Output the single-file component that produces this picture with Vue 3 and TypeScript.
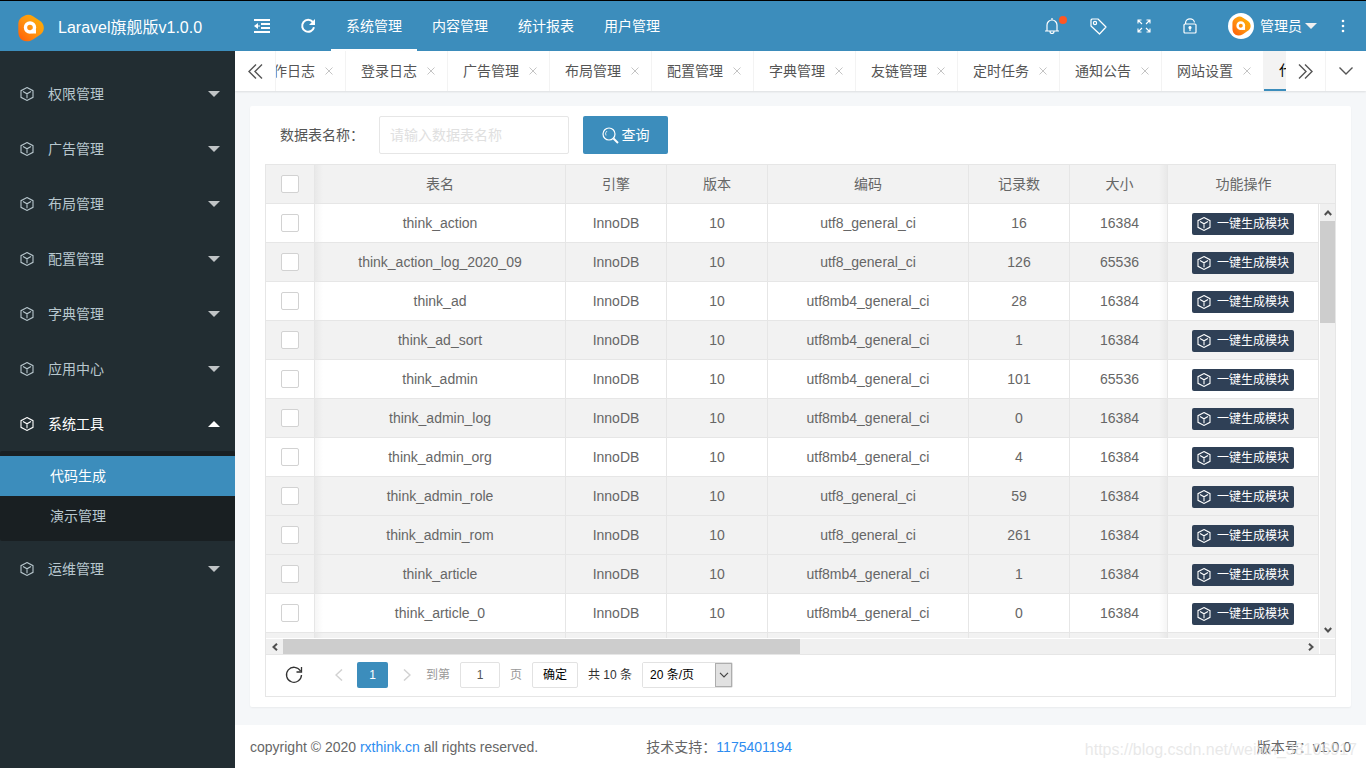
<script setup lang="ts">
import { ref } from 'vue'

interface MenuItem {
  title: string
  open?: boolean
  children?: string[]
}

interface TableRow {
  name: string
  charset: string
  count: number
  size: number
  hover?: boolean
}

const topNav: string[] = ['系统管理', '内容管理', '统计报表', '用户管理']

const menu: MenuItem[] = [
  { title: '权限管理' },
  { title: '广告管理' },
  { title: '布局管理' },
  { title: '配置管理' },
  { title: '字典管理' },
  { title: '应用中心' },
  { title: '系统工具', open: true, children: ['代码生成', '演示管理'] },
  { title: '运维管理' },
]

const tabs: string[] = [
  '操作日志', '登录日志', '广告管理', '布局管理', '配置管理', '字典管理',
  '友链管理', '定时任务', '通知公告', '网站设置', '代码生成',
]

const rows: TableRow[] = [
  { name: 'think_action', charset: 'utf8_general_ci', count: 16, size: 16384 },
  { name: 'think_action_log_2020_09', charset: 'utf8_general_ci', count: 126, size: 65536 },
  { name: 'think_ad', charset: 'utf8mb4_general_ci', count: 28, size: 16384 },
  { name: 'think_ad_sort', charset: 'utf8mb4_general_ci', count: 1, size: 16384 },
  { name: 'think_admin', charset: 'utf8mb4_general_ci', count: 101, size: 65536 },
  { name: 'think_admin_log', charset: 'utf8mb4_general_ci', count: 0, size: 16384 },
  { name: 'think_admin_org', charset: 'utf8mb4_general_ci', count: 4, size: 16384 },
  { name: 'think_admin_role', charset: 'utf8_general_ci', count: 59, size: 16384 },
  { name: 'think_admin_rom', charset: 'utf8_general_ci', count: 261, size: 16384, hover: true },
  { name: 'think_article', charset: 'utf8mb4_general_ci', count: 1, size: 16384 },
  { name: 'think_article_0', charset: 'utf8mb4_general_ci', count: 0, size: 16384 },
]

const keyword = ref('')
const page = ref('1')
const limit = ref('20')
</script>

<template>
  <div class="app">
    <svg class="defs" width="0" height="0" aria-hidden="true">
      <defs>
        <linearGradient id="brandFill" x1="1" y1="0" x2="0" y2="1">
          <stop offset="0" stop-color="#ffb400" />
          <stop offset="0.5" stop-color="#ff9410" />
          <stop offset="1" stop-color="#ff5a08" />
        </linearGradient>
        <symbol id="brand" viewBox="0 0 26 28">
          <path d="M6 2C9 .3 12 .6 15 2.300l6 4c3.500 2 4.800 4.500 4.800 7.700s-1.500 5.500-4.800 7.500l-6 4c-3.500 2.200-7.500 2.400-10.500.8C1.500 24.500.4 21.500.3 18V9.500C.5 6 2.500 3.500 6 2z" fill="url(#brandFill)" />
          <circle cx="12" cy="13.500" r="4.500" fill="none" stroke="#fff" stroke-width="3.400" />
          <path d="M13.500 15.500h4.500v4h-4.500z" fill="#fff" />
        </symbol>
        <symbol id="cube" viewBox="0 0 14 14">
          <path d="M7 .6 13 3.700v6.600L7 13.400 1 10.300V3.700zM3 4.600 7 6.800 11 4.600M7 6.800v4.400" fill="none" stroke="currentColor" stroke-width="1.100" />
        </symbol>
      </defs>
    </svg>

    <header class="header">
      <div class="logo">
        <svg width="26" height="28"><use href="#brand" /></svg>
        <h1>Laravel旗舰版v1.0.0</h1>
      </div>
      <button class="icon-btn" type="button" aria-label="折叠菜单">
        <svg width="16" height="14" viewBox="0 0 16 14" fill="none" stroke="currentColor">
          <path d="M0 1h16M7 5h9M7 9h9M0 13h16" stroke-width="1.800" />
          <path d="M0 7 4 4v6z" fill="currentColor" stroke="none" /><path d="M3 7h3" />
        </svg>
      </button>
      <button class="icon-btn" type="button" aria-label="刷新页面">
        <svg width="16" height="16" viewBox="0 0 16 16" fill="none" stroke="currentColor" stroke-width="2">
          <path d="M12.800 4A6 6 0 1 0 14 9.300" /><path d="M15 1v6H9z" fill="currentColor" stroke="none" />
        </svg>
      </button>
      <nav class="top-nav">
        <a v-for="(n, i) in topNav" :key="n" href="#" :class="{ active: i === 0 }">{{ n }}</a>
      </nav>
      <div class="tools">
        <button class="icon-btn" type="button" aria-label="消息">
          <svg width="16" height="16" viewBox="0 0 16 16" fill="none" stroke="currentColor" stroke-width="1.200">
            <path d="M1 13h14M3 13V7a5 5 0 0 1 10 0v6M8 0v2M6 13.500a2 2 0 0 0 4 0" />
          </svg>
          <i class="dot"></i>
        </button>
        <button class="icon-btn" type="button" aria-label="标签">
          <svg width="17" height="17" viewBox="0 0 17 17" fill="none" stroke="currentColor" stroke-width="1.200">
            <path d="M1 2 2 1h6l8 8-6.500 7L1 8z" stroke-linejoin="round" /><circle cx="5" cy="5" r="1.600" />
          </svg>
        </button>
        <button class="icon-btn" type="button" aria-label="全屏">
          <svg width="14" height="14" viewBox="0 0 14 14" fill="none" stroke="currentColor" stroke-width="1.100">
            <path d="M1 4.500V1h3.500M1 1l4 4M9.500 1H13v3.500M13 1 9 5M1 9.500V13h3.500M1 13l4-4M13 9.500V13H9.500M13 13 9 9" />
          </svg>
        </button>
        <button class="icon-btn" type="button" aria-label="锁屏">
          <svg width="14" height="16" viewBox="0 0 14 16" fill="none" stroke="currentColor" stroke-width="1.200">
            <rect x="1" y="6" width="12" height="9" rx="1" /><path d="M2.600 6V4.500a4.400 3.700 0 0 1 8.800 0M7 10v3" /><circle cx="7" cy="9.500" r="1" fill="currentColor" />
          </svg>
        </button>
        <button class="user" type="button">
          <span class="avatar"><svg width="19" height="20"><use href="#brand" /></svg></span>
          <span>管理员</span>
          <i class="caret"></i>
        </button>
        <button class="icon-btn" type="button" aria-label="更多">
          <svg width="4" height="14" viewBox="0 0 4 14" fill="currentColor"><circle cx="2" cy="2" r="1.300" /><circle cx="2" cy="7" r="1.300" /><circle cx="2" cy="12" r="1.300" /></svg>
        </button>
      </div>
    </header>

    <div class="layout">
      <aside class="side">
        <ul>
          <li v-for="m in menu" :key="m.title" :class="{ open: m.open }">
            <a class="menu-link" href="#">
              <svg width="14" height="14"><use href="#cube" /></svg>
              <span>{{ m.title }}</span>
              <i class="caret"></i>
            </a>
            <div v-if="m.children" class="sub">
              <a v-for="(c, i) in m.children" :key="c" href="#" :class="{ active: i === 0 }">{{ c }}</a>
            </div>
          </li>
        </ul>
      </aside>

      <div class="content">
        <div class="tab-bar">
          <button class="tab-ctl prev" type="button" aria-label="向左">
            <svg width="15" height="15" viewBox="0 0 15 15" fill="none" stroke="currentColor" stroke-width="1.400"><path d="M8 .5 1 7.500l7 7M14 .5 7 7.500l7 7" /></svg>
          </button>
          <div class="tab-view">
            <div class="tab-strip">
              <div v-for="t in tabs" :key="t" class="tab" :class="{ active: t === '代码生成' }">
                <a href="#">{{ t }}</a>
                <button type="button" aria-label="关闭">
                  <svg width="8" height="8" viewBox="0 0 8 8" stroke="currentColor"><path d="M.5.5l7 7M7.500.5l-7 7" /></svg>
                </button>
              </div>
            </div>
          </div>
          <button class="tab-ctl next" type="button" aria-label="向右">
            <svg width="15" height="15" viewBox="0 0 15 15" fill="none" stroke="currentColor" stroke-width="1.400"><path d="M1 .5l7 7-7 7M7 .5l7 7-7 7" /></svg>
          </button>
          <button class="tab-ctl" type="button" aria-label="标签操作">
            <svg width="14" height="8" viewBox="0 0 14 8" fill="none" stroke="currentColor" stroke-width="1.400"><path d="M.5.5 7 7 13.500.5" /></svg>
          </button>
        </div>

        <main class="card">
          <form class="search" @submit.prevent>
            <label for="kw">数据表名称：</label>
            <input id="kw" v-model="keyword" type="text" placeholder="请输入数据表名称" />
            <button type="submit">
              <svg width="17" height="17" viewBox="0 0 17 17" fill="none" stroke="currentColor">
                <circle cx="7" cy="7" r="6" stroke-width="1.200" /><path d="M4 8.500A3.500 3.500 0 0 1 5 4" stroke-width=".8" /><path d="m11.500 11.500 4.500 4.500" stroke-width="2" />
              </svg>
              <span>查询</span>
            </button>
          </form>

          <section class="grid">
            <table class="head">
              <colgroup>
                <col class="w-check" /><col /><col class="w-sm" /><col class="w-sm" /><col class="w-lg" /><col class="w-sm" /><col class="w-size" /><col class="w-act" /><col class="w-bar" />
              </colgroup>
              <thead>
                <tr>
                  <th><input type="checkbox" aria-label="全选" /></th>
                  <th class="shade-l">表名</th>
                  <th>引擎</th>
                  <th>版本</th>
                  <th>编码</th>
                  <th>记录数</th>
                  <th class="shade-r">大小</th>
                  <th class="plain">功能操作</th>
                  <th class="plain"></th>
                </tr>
              </thead>
            </table>
            <div class="body">
              <div class="view">
                <table>
                  <colgroup>
                    <col class="w-check" /><col /><col class="w-sm" /><col class="w-sm" /><col class="w-lg" /><col class="w-sm" /><col class="w-size" /><col class="w-act" />
                  </colgroup>
                  <tbody>
                    <tr v-for="r in rows" :key="r.name" :class="{ hover: r.hover }">
                      <td><input type="checkbox" :aria-label="r.name" /></td>
                      <td class="shade-l">{{ r.name }}</td>
                      <td>InnoDB</td>
                      <td>10</td>
                      <td>{{ r.charset }}</td>
                      <td>{{ r.count }}</td>
                      <td class="shade-r">{{ r.size }}</td>
                      <td>
                        <button class="gen" type="button">
                          <svg width="14" height="14"><use href="#cube" /></svg>
                          <span>一键生成模块</span>
                        </button>
                      </td>
                    </tr>
                    <tr aria-hidden="true">
                      <td></td><td class="shade-l"></td><td></td><td></td><td></td><td></td><td class="shade-r"></td><td></td>
                    </tr>
                  </tbody>
                </table>
              </div>
              <div class="vbar">
                <span class="arrow"><svg width="8" height="6" viewBox="0 0 8 6"><path d="M.8 5 4 1.500 7.200 5" /></svg></span>
                <span class="thumb"></span>
                <span class="arrow end"><svg width="8" height="6" viewBox="0 0 8 6"><path d="M.8 1 4 4.500 7.200 1" /></svg></span>
              </div>
            </div>
            <div class="hbar">
              <span class="arrow"><svg width="6" height="8" viewBox="0 0 6 8"><path d="M5 .8 1.500 4 5 7.200" /></svg></span>
              <span class="track"><span class="thumb"></span></span>
              <span class="arrow"><svg width="6" height="8" viewBox="0 0 6 8"><path d="M1 .8 4.500 4 1 7.200" /></svg></span>
              <span class="corner"></span>
            </div>
            <div class="pager">
              <button class="reload" type="button" aria-label="刷新">
                <svg width="18" height="18" viewBox="0 0 18 18" fill="none" stroke="currentColor" stroke-width="1.300"><path d="M15.500 5A7.500 7.500 0 1 0 16.500 9M16.500 1v5h-5" /></svg>
              </button>
              <button class="step" type="button" aria-label="上一页">
                <svg width="8" height="12" viewBox="0 0 8 12"><path d="M7 .5 1 6l6 5.500" /></svg>
              </button>
              <button class="num" type="button">1</button>
              <button class="step after" type="button" aria-label="下一页">
                <svg width="8" height="12" viewBox="0 0 8 12"><path d="m1 .5 6 5.500-6 5.500" /></svg>
              </button>
              <label class="skip">到第<input v-model="page" type="text" />页</label>
              <button class="ok" type="button">确定</button>
              <span class="total">共 10 条</span>
              <span class="limit">
                <select v-model="limit" aria-label="每页条数">
                  <option value="20">20 条/页</option>
                </select>
                <i><svg width="10" height="6" viewBox="0 0 10 6"><path d="M1 .8 5 4.800 9 .8" /></svg></i>
              </span>
            </div>
          </section>
        </main>

        <footer class="footer">
          <span>copyright © 2020 <a href="#">rxthink.cn</a> all rights reserved.</span>
          <span>技术支持：<a href="#">1175401194</a></span>
          <span>版本号：v1.0.0</span>
        </footer>
      </div>
    </div>
    <span class="watermark">https://blog.csdn.net/weixin_38106917</span>
  </div>
</template>

<style>
body {
  margin: 0;
}
</style>

<style scoped>
* {
  box-sizing: border-box;
}
.app {
  height: 100vh;
  display: flex;
  flex-direction: column;
  border-top: 1px solid #000;
  background: #f5f7f9;
  color: #666;
  font: 14px/20px "Liberation Sans", "Noto Sans CJK SC", sans-serif;
  overflow: hidden;
}
.defs {
  position: absolute;
}
a {
  color: inherit;
  text-decoration: none;
}
button,
input,
select {
  margin: 0;
  font: inherit;
  color: inherit;
}
button {
  padding: 0;
  border: 0;
  background: none;
  cursor: pointer;
}
svg {
  flex: none;
}

/* header */
.header {
  flex: none;
  display: flex;
  height: 50px;
  background: #3c8dbc;
  color: #fff;
}
.logo {
  display: flex;
  align-items: center;
  gap: 14px;
  width: 239px;
  padding: 3px 0 0 18px;
}
.logo h1 {
  margin: 0;
  font-size: 16px;
  font-weight: 400;
  white-space: nowrap;
}
.icon-btn {
  position: relative;
  display: flex;
  align-items: center;
  justify-content: center;
  width: 46px;
  height: 50px;
}
.top-nav {
  display: flex;
}
.top-nav a {
  padding: 0 15px;
  line-height: 50px;
}
.top-nav a.active {
  border-bottom: 2px solid #fff;
}
.tools {
  display: flex;
  margin-left: auto;
}
.dot {
  position: absolute;
  top: 15px;
  right: 8px;
  width: 8px;
  height: 8px;
  border-radius: 50%;
  background: #ff5722;
}
.user {
  display: flex;
  align-items: center;
  width: 107px;
  padding-left: 15px;
  gap: 6px;
}
.avatar {
  display: flex;
  align-items: center;
  justify-content: center;
  width: 26px;
  height: 26px;
  border-radius: 50%;
  background: #fff;
}
.caret {
  flex: none;
  border: 6px solid transparent;
  border-top-color: currentColor;
  border-bottom: 0;
}
.user .caret {
  margin-left: -3px;
  color: #f0f0f0;
}

/* sidebar */
.layout {
  flex: 1;
  display: flex;
  min-height: 0;
}
.side {
  flex: none;
  width: 235px;
  background: #222d32;
  color: #b8c7ce;
}
.side ul {
  margin: 0;
  padding: 15px 0 0;
  list-style: none;
}
.menu-link {
  display: flex;
  align-items: center;
  gap: 14px;
  height: 55px;
  padding: 0 15px 0 20px;
}
.menu-link .caret {
  margin-left: auto;
  color: #c0c4c6;
}
.open .menu-link {
  color: #fff;
}
.open .caret {
  border-top: 0;
  border-bottom: 6px solid #fff;
}
.sub {
  padding: 5px 0;
  border-radius: 2px;
  background: #191f22;
}
.sub a {
  display: block;
  padding-left: 50px;
  line-height: 40px;
}
.sub a.active {
  background: #3c8dbc;
  color: #fff;
}

/* tabs */
.content {
  flex: 1;
  display: flex;
  flex-direction: column;
  min-width: 0;
}
.tab-bar {
  flex: none;
  display: flex;
  height: 40px;
  background: #fff;
  box-shadow: 0 1px 2px rgba(0, 0, 0, 0.1);
  color: #555;
}
.tab-ctl {
  flex: none;
  display: flex;
  align-items: center;
  justify-content: center;
  width: 40px;
}
.prev {
  width: 41px;
  border-right: 1px solid #f3f3f3;
}
.next {
  border-right: 1px solid #f3f3f3;
}
.tab-view {
  flex: 1;
  min-width: 0;
  overflow: hidden;
}
.tab-strip {
  display: flex;
  width: max-content;
  margin-left: -32px;
}
.tab {
  display: flex;
  align-items: center;
  width: 102px;
  height: 40px;
  padding-left: 15px;
  border-right: 1px solid #f3f3f3;
}
.tab button {
  display: flex;
  padding: 4px 10px;
  color: #c4c4c4;
}
.tab.active {
  border-bottom: 2px solid #3c8dbc;
  background: #f3f3f3;
  color: #000;
}

/* card */
.card {
  flex: 1;
  display: flex;
  flex-direction: column;
  min-height: 0;
  margin: 15px 15px 18px;
  padding: 10px 15px;
  border-radius: 2px;
  background: #fff;
  box-shadow: 0 1px 2px rgba(0, 0, 0, 0.05);
}
.search {
  flex: none;
  display: flex;
  align-items: center;
  margin-bottom: 10px;
  color: #555;
}
.search label {
  width: 114px;
  padding-left: 15px;
}
.search input {
  width: 190px;
  height: 38px;
  padding: 0 10px;
  border: 1px solid #e6e6e6;
  border-radius: 2px;
  outline: 0;
}
.search input::placeholder {
  color: #e0e0e0;
}
.search button {
  display: flex;
  align-items: center;
  justify-content: center;
  gap: 3px;
  width: 85px;
  height: 38px;
  margin-left: 14px;
  border-radius: 2px;
  background: #3c8dbc;
  color: #fff;
}

/* data grid */
.grid {
  flex: 1;
  display: flex;
  flex-direction: column;
  min-height: 0;
  border: 1px solid #e6e6e6;
}
table {
  width: 100%;
  table-layout: fixed;
  border-collapse: separate;
  border-spacing: 0;
}
.w-check {
  width: 49px;
}
.w-sm {
  width: 101px;
}
.w-lg {
  width: 201px;
}
.w-size {
  width: 98px;
}
.w-act {
  width: 151px;
}
.w-bar {
  width: 16px;
}
th,
td {
  height: 39px;
  padding: 0;
  border: solid #e6e6e6;
  border-width: 0 1px 1px 0;
  font-weight: 400;
  text-align: center;
}
th.plain {
  border-right: 0;
}
.head {
  flex: none;
  background: #f2f2f2;
}
tbody tr:nth-child(even),
tbody tr.hover {
  background: #f2f2f2;
}
.shade-l {
  background: linear-gradient(to right, rgba(0, 0, 0, 0.04), transparent 8px) no-repeat;
}
.shade-r {
  padding-left: 2px;
  background: linear-gradient(to left, rgba(0, 0, 0, 0.04), transparent 8px) no-repeat;
}
input[type='checkbox'] {
  display: block;
  width: 18px;
  height: 18px;
  margin: 0 auto;
  appearance: none;
  border: 1px solid #d2d2d2;
  border-radius: 2px;
  background: #fff;
}
.gen {
  display: flex;
  align-items: center;
  gap: 6px;
  height: 22px;
  margin: 1px auto 0;
  padding: 0 5px;
  border-radius: 2px;
  background: #2f4056;
  color: #fff;
  font-size: 12px;
}
.body {
  flex: 1;
  display: flex;
  min-height: 0;
}
.view {
  flex: 1;
  min-width: 0;
  overflow: hidden;
}
.vbar {
  flex: none;
  display: flex;
  flex-direction: column;
  width: 16px;
  border-left: 1px solid #fff;
  background: #f0f0f0;
}
.arrow {
  flex: none;
  display: flex;
  align-items: center;
  justify-content: center;
  width: 17px;
  height: 17px;
}
.vbar .arrow {
  width: 15px;
}
.arrow path {
  fill: none;
  stroke: #505050;
  stroke-width: 2;
}
.end {
  margin-top: auto;
}
.thumb {
  background: #cdcdcd;
}
.vbar .thumb {
  height: 23.5%;
}
.hbar {
  flex: none;
  display: flex;
  align-items: center;
  height: 17px;
  border-top: 1px solid #fff;
  border-bottom: 1px solid #e6e6e6;
  background: #f0f0f0;
}
.track {
  flex: 1;
  display: flex;
  height: 100%;
}
.track .thumb {
  width: 50.7%;
}
.corner {
  width: 16px;
  height: 100%;
  border-left: 1px solid #fff;
}

/* pager */
.pager {
  flex: none;
  display: flex;
  align-items: center;
  height: 41px;
  padding: 0 0 2px 19px;
  color: #333;
  font-size: 12px;
}
.reload {
  display: flex;
  margin-right: 30px;
}
.step {
  display: flex;
  align-items: center;
  justify-content: center;
  width: 12px;
  height: 26px;
  margin-right: 12px;
}
.step.after {
  margin: 0 13px;
}
.step path {
  fill: none;
  stroke: #d2d2d2;
  stroke-width: 1.5;
}
.num {
  width: 31px;
  height: 26px;
  border-radius: 2px;
  background: #3c8dbc;
  color: #fff;
}
.skip {
  display: flex;
  align-items: center;
  gap: 10px;
  color: #999;
}
.skip input {
  width: 40px;
  height: 26px;
  padding: 0;
  border: 1px solid #e2e2e2;
  border-radius: 2px;
  color: #555;
  text-align: center;
}
.ok {
  width: 46px;
  height: 26px;
  margin: 0 10px;
  border: 1px solid #e2e2e2;
  border-radius: 2px;
  color: #000;
}
.limit {
  display: flex;
  width: 91px;
  height: 26px;
  margin-left: 10px;
  border: 1px solid #e2e2e2;
  border-radius: 2px;
}
.limit select {
  flex: 1;
  width: 72px;
  padding: 0 7px;
  border: 0;
  appearance: none;
  background: #fff;
  color: #000;
}
.limit i {
  display: flex;
  align-items: center;
  justify-content: center;
  width: 17px;
  border: 1px solid #adadad;
  background: #e1e1e1;
}
.limit path {
  fill: none;
  stroke: #444;
  stroke-width: 1.2;
}

/* footer */
.footer {
  flex: none;
  display: grid;
  grid-template-columns: 36% 1fr auto;
  align-items: center;
  height: 43px;
  padding: 0 15px;
  background: #fff;
}
.footer a {
  color: #2d8cf0;
}
.watermark {
  position: absolute;
  right: 9px;
  bottom: 8px;
  color: rgba(225, 225, 225, 0.75);
  font-size: 16px;
  pointer-events: none;
}
</style>
